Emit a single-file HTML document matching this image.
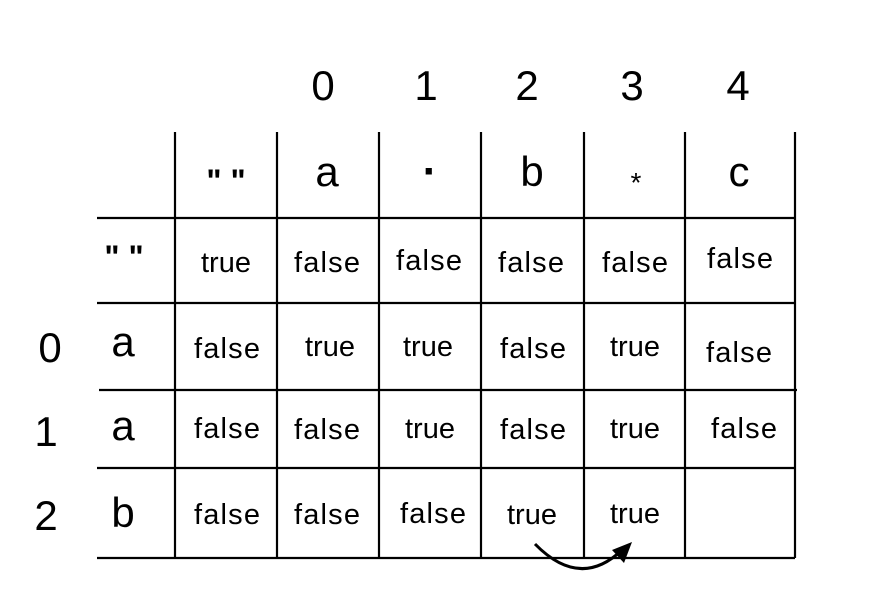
<!DOCTYPE html>
<html><head><meta charset="utf-8"><style>html,body{margin:0;padding:0;background:#fff;width:878px;height:614px;overflow:hidden}</style></head>
<body>
<svg width="878" height="614" viewBox="0 0 878 614" xmlns="http://www.w3.org/2000/svg" font-family="Liberation Sans, Arial, sans-serif" fill="#000">
<g stroke="#000" stroke-width="2.2" fill="none">
<line x1="175" y1="132" x2="175" y2="558"/>
<line x1="277" y1="132" x2="277" y2="558"/>
<line x1="379" y1="132" x2="379" y2="558"/>
<line x1="481" y1="132" x2="481" y2="558"/>
<line x1="584" y1="132" x2="584" y2="558"/>
<line x1="685" y1="132" x2="685" y2="558"/>
<line x1="795" y1="132" x2="795" y2="558"/>
<line x1="97" y1="218" x2="795" y2="218"/>
<line x1="97" y1="303" x2="795" y2="303"/>
<line x1="99" y1="390" x2="797" y2="390"/>
<line x1="97" y1="468" x2="795" y2="468"/>
<line x1="97" y1="558" x2="795" y2="558"/>
<path d="M535 544 Q580 590 622 550" stroke-width="3"/>
</g>
<polygon points="632,542 612,550 624,563"/>
<g font-size="42" text-anchor="middle">
<text x="323" y="100">0</text><text x="426" y="100">1</text><text x="527" y="100">2</text><text x="632" y="100">3</text><text x="738" y="100">4</text>
<text x="327" y="186">a</text><text x="532" y="186">b</text><text x="739" y="186">c</text>
<text x="123" y="356">a</text><text x="123" y="440">a</text><text x="123" y="527">b</text>
<text x="50" y="362">0</text><text x="46" y="446">1</text><text x="46" y="530">2</text>
</g>
<g text-anchor="middle" font-weight="bold">
<text x="226" y="192" font-size="32">" "</text><text x="124" y="268" font-size="32">" "</text>
<text x="430" y="186" font-size="44">·</text><text x="636" y="192" font-size="28" font-weight="normal">*</text>
</g>
<g font-size="29" text-anchor="middle" transform="translate(0,0)">
<text x="226" y="272">true</text><text x="327" y="272" textLength="66">false</text><text x="429" y="270" textLength="66">false</text><text x="531" y="272" textLength="66">false</text><text x="635" y="272" textLength="66">false</text><text x="740" y="268" textLength="66">false</text>
<text x="227" y="358" textLength="66">false</text><text x="330" y="356">true</text><text x="428" y="356">true</text><text x="533" y="358" textLength="66">false</text><text x="635" y="356">true</text><text x="739" y="362" textLength="66">false</text>
<text x="227" y="438" textLength="66">false</text><text x="327" y="439" textLength="66">false</text><text x="430" y="438">true</text><text x="533" y="439" textLength="66">false</text><text x="635" y="438">true</text><text x="744" y="438" textLength="66">false</text>
<text x="227" y="524" textLength="66">false</text><text x="327" y="524" textLength="66">false</text><text x="433" y="523" textLength="66">false</text><text x="532" y="524">true</text><text x="635" y="523">true</text>
</g>
</svg>
</body></html>
